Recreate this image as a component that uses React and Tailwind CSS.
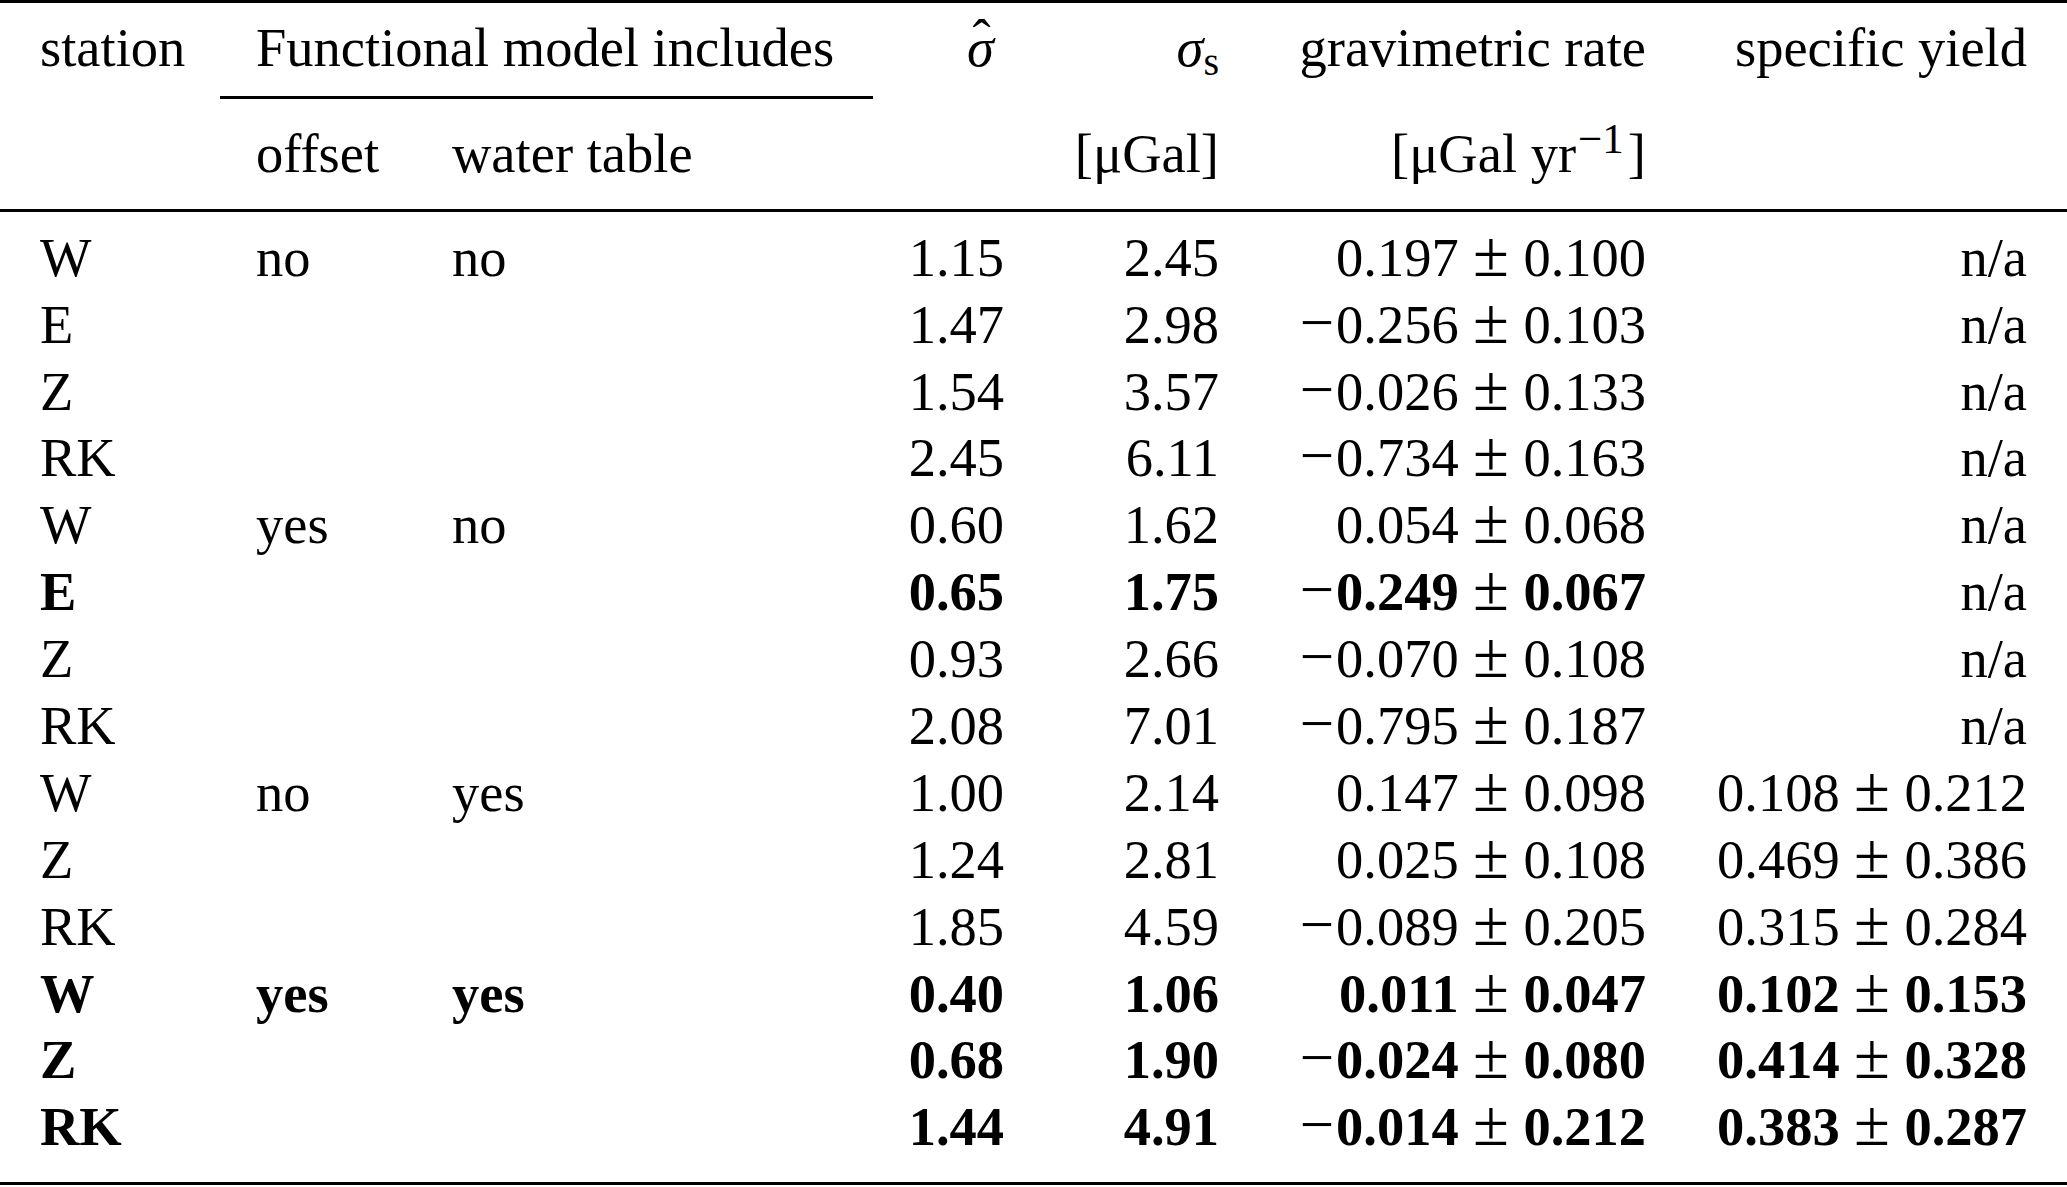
import React from "react";

const rows = [
  { st: "W", off: "no", wt: "no", sh: "1.15", ss: "2.45", gr: ["0.197", "0.100"], sy: null },
  { st: "E", sh: "1.47", ss: "2.98", gr: ["−0.256", "0.103"], sy: null },
  { st: "Z", sh: "1.54", ss: "3.57", gr: ["−0.026", "0.133"], sy: null },
  { st: "RK", sh: "2.45", ss: "6.11", gr: ["−0.734", "0.163"], sy: null },
  { st: "W", off: "yes", wt: "no", sh: "0.60", ss: "1.62", gr: ["0.054", "0.068"], sy: null },
  { st: "E", sh: "0.65", ss: "1.75", gr: ["−0.249", "0.067"], sy: null, bold: true },
  { st: "Z", sh: "0.93", ss: "2.66", gr: ["−0.070", "0.108"], sy: null },
  { st: "RK", sh: "2.08", ss: "7.01", gr: ["−0.795", "0.187"], sy: null },
  { st: "W", off: "no", wt: "yes", sh: "1.00", ss: "2.14", gr: ["0.147", "0.098"], sy: ["0.108", "0.212"] },
  { st: "Z", sh: "1.24", ss: "2.81", gr: ["0.025", "0.108"], sy: ["0.469", "0.386"] },
  { st: "RK", sh: "1.85", ss: "4.59", gr: ["−0.089", "0.205"], sy: ["0.315", "0.284"] },
  { st: "W", off: "yes", wt: "yes", sh: "0.40", ss: "1.06", gr: ["0.011", "0.047"], sy: ["0.102", "0.153"], bold: true },
  { st: "Z", sh: "0.68", ss: "1.90", gr: ["−0.024", "0.080"], sy: ["0.414", "0.328"], bold: true },
  { st: "RK", sh: "1.44", ss: "4.91", gr: ["−0.014", "0.212"], sy: ["0.383", "0.287"], bold: true },
];

const cols = "grid grid-cols-[220px_196px_457px_167px_215px_427px_385px]";
const grid = `${cols} h-[66.9px] leading-[66.9px] whitespace-nowrap`;

// value ± error, math style: minus and ± stay regular weight
const PlusMinus = ({ pair }) => {
  const [v, e] = pair;
  const neg = v.startsWith("−");
  return (
    <span>
      {neg && <span className="font-normal text-[1.12em] leading-[0] mr-[2px]">−</span>}
      {neg ? v.slice(1) : v}
      <span className="font-normal text-[1.2em] leading-[0] mx-[0.22em]">±</span>
      {e}
    </span>
  );
};

const Rule = ({ mt }) => <div className={`h-[3px] bg-black ${mt}`} />;

export default function App() {
  return (
    <div className="w-[2067px] h-[1187px] bg-white text-black font-['Liberation_Serif',serif] text-[54.5px]">
      <Rule mt="mt-0" />

      {/* Header row 1 */}
      <div className={`${grid} mt-[12px]`}>
        <div className="pl-[40px]">station</div>
        <div className="col-span-2 pl-[36px]">Functional model includes</div>
        <div className="text-right pr-[46px]">
          <span className="relative inline-block italic">
            σ
            <span className="absolute left-[0.1em] top-[-0.17em] not-italic">ˆ</span>
          </span>
        </div>
        <div className="text-right pr-[36px]">
          <span className="italic">σ</span>
          <span className="relative top-[9px] text-[40px] leading-none">s</span>
        </div>
        <div className="text-right pr-[36px]">gravimetric rate</div>
        <div className="text-right pr-[40px]">specific yield</div>
      </div>

      {/* cmidrule */}
      <div className={`${cols} mt-[14px]`}>
        <div className="col-start-2 col-span-2 h-[3px] bg-black" />
      </div>

      {/* Header row 2 */}
      <div className={`${grid} mt-[22px]`}>
        <div />
        <div className="pl-[36px]">offset</div>
        <div className="pl-[36px]">water table</div>
        <div />
        <div className="text-right pr-[36px]">[μGal]</div>
        <div className="text-right pr-[36px]">
          [μGal<span className="ml-[0.25em]">yr</span>
          <span className="relative top-[-19px] ml-[2px] mr-[4px] text-[43px] leading-none">−1</span>]
        </div>
        <div />
      </div>

      <Rule mt="mt-[21px]" />

      {/* Body */}
      <div className="mt-[13px]">
        {rows.map((r, i) => (
          <div key={i} className={`${grid} ${r.bold ? "font-bold" : ""}`}>
            <div className="pl-[40px]">{r.st}</div>
            <div className="pl-[36px]">{r.off || ""}</div>
            <div className="pl-[36px]">{r.wt || ""}</div>
            <div className="text-right pr-[36px]">{r.sh}</div>
            <div className="text-right pr-[36px]">{r.ss}</div>
            <div className="text-right pr-[36px]">
              <PlusMinus pair={r.gr} />
            </div>
            <div className="text-right pr-[40px]">
              {r.sy ? <PlusMinus pair={r.sy} /> : <span className="font-normal">n/a</span>}
            </div>
          </div>
        ))}
      </div>

      <Rule mt="mt-[21px]" />
    </div>
  );
}
